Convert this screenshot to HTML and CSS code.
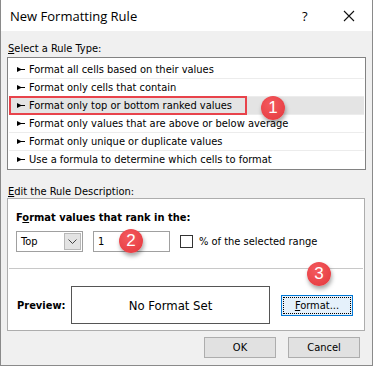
FILE: index.html
```html
<!DOCTYPE html>
<html lang="en">
	<head>
		<meta charset="UTF-8" />
		<title>New Formatting Rule</title>
		<link rel="stylesheet" href="styles.css">
	</head>
	<body>
		<div class="dialog">
			<div class="titlebar">
				<span class="title">New Formatting Rule</span>
				<span class="help">?</span>
				<span class="close">
					<svg width="12" height="12" viewBox="0 0 12 12"><path d="M1 1 L11 11 M11 1 L1 11" stroke="#111" stroke-width="1.1" fill="none"/></svg>
				</span>
			</div>

			<div class="content">
				<div class="label"><u>S</u>elect a Rule Type:</div>
				<div class="listbox">
					<div class="row"><svg class="arrow" width="8" height="5" viewBox="0 0 8 5"><path d="M0 0 L4 2 L8 2 L8 3 L4 3 L0 5 Z"/></svg>Format all cells based on their values</div>
					<div class="row"><svg class="arrow" width="8" height="5" viewBox="0 0 8 5"><path d="M0 0 L4 2 L8 2 L8 3 L4 3 L0 5 Z"/></svg>Format only cells that contain</div>
					<div class="row selected">
						<span class="mark"><svg class="arrow" width="8" height="5" viewBox="0 0 8 5"><path d="M0 0 L4 2 L8 2 L8 3 L4 3 L0 5 Z"/></svg>Format only top or bottom ranked values</span>
						<span class="badge badge-1">1</span>
					</div>
					<div class="row"><svg class="arrow" width="8" height="5" viewBox="0 0 8 5"><path d="M0 0 L4 2 L8 2 L8 3 L4 3 L0 5 Z"/></svg>Format only values that are above or below average</div>
					<div class="row"><svg class="arrow" width="8" height="5" viewBox="0 0 8 5"><path d="M0 0 L4 2 L8 2 L8 3 L4 3 L0 5 Z"/></svg>Format only unique or duplicate values</div>
					<div class="row last"><svg class="arrow" width="8" height="5" viewBox="0 0 8 5"><path d="M0 0 L4 2 L8 2 L8 3 L4 3 L0 5 Z"/></svg>Use a formula to determine which cells to format</div>
				</div>

				<div class="label label-edit"><u>E</u>dit the Rule Description:</div>
				<div class="group">
					<div class="group-top">
						<div class="heading">F<u>o</u>rmat values that rank in the:</div>
						<div class="controls">
							<div class="combo">
								<span class="combo-text">Top</span>
								<span class="combo-btn">
									<svg width="9" height="5" viewBox="0 0 9 5"><path d="M0.5 0.5 L4.5 4.5 L8.5 0.5" stroke="#444" fill="none"/></svg>
								</span>
							</div>
							<div class="input">1<span class="badge badge-2">2</span></div>
							<span class="checkbox"></span>
							<span class="check-label">% of the selected ran<u>g</u>e</span>
						</div>
					</div>
					<div class="group-bottom">
						<span class="preview-label">Preview:</span>
						<div class="preview">No Format Set</div>
						<div class="format-wrap">
							<span class="badge badge-3">3</span>
							<button class="btn btn-format"><span class="focus"><u>F</u>ormat...</span></button>
						</div>
					</div>
				</div>

				<div class="footer">
					<button class="btn">OK</button>
					<button class="btn">Cancel</button>
				</div>
			</div>
		</div>
	</body>
</html>
```

FILE: styles.css
```css
body {
	margin: 0;
	font-family: "DejaVu Sans Condensed", "DejaVu Sans", sans-serif;
	font-size: 11px;
	color: #000;
	background: #fff;
}
.dialog {
	width: 373px;
	height: 366px;
	box-sizing: border-box;
	border: 1px solid #8a8a8a;
	border-top: none;
	display: flex;
	flex-direction: column;
}
.titlebar {
	height: 31px;
	background: #fff;
	display: flex;
	align-items: center;
	padding-left: 9px;
	font-family: "Open Sans", sans-serif;
	font-size: 13px;
}
.title {
	flex: 1;
}
.help {
	width: 18px;
	margin-right: 23px;
	font-size: 13px;
}
.close {
	width: 12px;
	margin-right: 17px;
	display: flex;
}
.content {
	flex: 1;
	background: #f0f0f0;
	padding: 10px 6px 0 6px;
	position: relative;
}
.label {
	height: 16px;
	line-height: 16px;
	padding-left: 1px;
}
.listbox {
	background: #fff;
	border: 1px solid #828282;
	padding: 3px 1px 1px 1px;
	width: 355px;
}
.row {
	height: 17px;
	line-height: 17px;
	border-bottom: 1px solid #ececec;
	padding-left: 8px;
	display: flex;
	align-items: center;
	position: relative;
}
.row.last {
	border-bottom: none;
}
.arrow {
	margin-right: 4px;
	fill: #000;
}
.row.selected {
	background: #e4e4e4;
	padding-left: 0;
}
.mark {
	display: flex;
	align-items: center;
	height: 15px;
	padding-left: 6px;
	padding-right: 13px;
	border: 2px solid #e8434b;
}
.badge {
	position: absolute;
	width: 24px;
	height: 24px;
	border-radius: 50%;
	background: radial-gradient(circle at 40% 35%, #f45a5e, #e3363c);
	color: #fff;
	font-family: "Liberation Sans", sans-serif;
	font-size: 17px;
	line-height: 24px;
	text-align: center;
	box-shadow: 1px 3px 4px rgba(0, 0, 0, 0.35);
}
.badge-1 {
	left: 252px;
	top: -1px;
}
.label-edit {
	margin-top: 15px;
	height: 13px;
	line-height: 14px;
}
.group {
	background: #fff;
	border: 1px solid #adadad;
	width: 358px;
	height: 133px;
	box-sizing: border-box;
	display: flex;
	flex-direction: column;
}
.group-top {
	padding: 11px 7px 0 7px;
	height: 70px;
	box-sizing: border-box;
	border-bottom: 1px solid #c8c8c8;
	margin: 0 1px;
}
.heading {
	font-weight: bold;
	height: 16px;
	line-height: 16px;
}
.controls {
	margin-top: 5px;
	display: flex;
	align-items: center;
}
.combo {
	width: 67px;
	height: 21px;
	box-sizing: border-box;
	border: 1px solid #a0a0a0;
	display: flex;
	align-items: center;
	padding: 0 1px 0 4px;
}
.combo-text {
	flex: 1;
}
.combo-btn {
	width: 17px;
	height: 17px;
	box-sizing: border-box;
	background: #e3e3e3;
	border: 1px solid #b8b8b8;
	display: flex;
	align-items: center;
	justify-content: center;
}
.input {
	margin-left: 10px;
	width: 77px;
	height: 21px;
	box-sizing: border-box;
	border: 1px solid #a0a0a0;
	padding-left: 4px;
	line-height: 19px;
	position: relative;
}
.badge-2 {
	left: 25px;
	top: -3px;
}
.checkbox {
	margin-left: 10px;
	width: 13px;
	height: 13px;
	box-sizing: border-box;
	border: 1px solid #333;
	background: #fff;
}
.check-label {
	margin-left: 6px;
}
.group-bottom {
	flex: 1;
	display: flex;
	align-items: center;
	padding: 11px 9px 0 9px;
}
.preview-label {
	font-weight: bold;
	width: 54px;
}
.preview {
	width: 199px;
	height: 38px;
	box-sizing: border-box;
	border: 1px solid #555;
	display: flex;
	align-items: center;
	justify-content: center;
	font-size: 13px;
}
.format-wrap {
	margin-left: 11px;
	position: relative;
}
.badge-3 {
	left: 26px;
	top: -33px;
}
.btn {
	width: 72px;
	height: 21px;
	background: #e1e1e1;
	border: 1px solid #adadad;
	font-family: inherit;
	font-size: 11px;
	color: #000;
	padding: 0;
}
.btn-format {
	background: #e5f1fb;
	border-color: #0078d7;
	padding: 1px;
	display: flex;
}
.focus {
	flex: 1;
	border: 1px dotted #000;
	line-height: 15px;
}
.footer {
	display: flex;
	justify-content: flex-end;
	gap: 12px;
	padding-right: 6px;
	margin-top: 6px;
}
```
